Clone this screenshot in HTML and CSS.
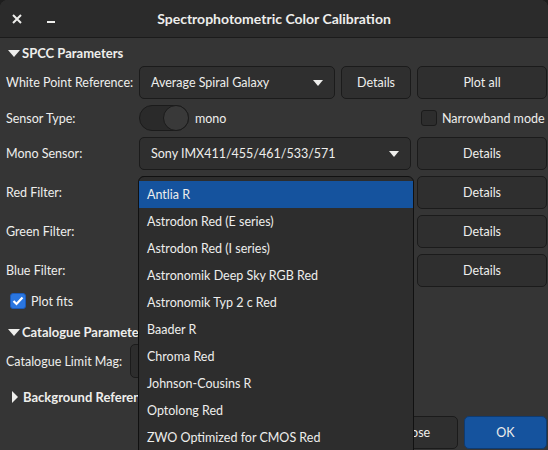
FILE: index.html
```html
<!DOCTYPE html>
<html lang="en">

<head>
    <meta charset="UTF-8">
    <title>Spectrophotometric Color Calibration</title>
    <link rel="stylesheet" href="styles.css">
</head>

<body>
    <div class="window">
        <header class="titlebar">
            <div class="tb-buttons">
                <svg class="tb-close" width="10" height="10" viewBox="0 0 10 10">
                    <path d="M1 1 L9 9 M9 1 L1 9" stroke="#eeeeec" stroke-width="2" />
                </svg>
                <span class="tb-min"></span>
            </div>
            <h1>Spectrophotometric Color Calibration</h1>
        </header>

        <main class="content">
            <div class="expander open">SPCC Parameters</div>

            <div class="params">
                <span class="label">White Point Reference:</span>
                <div class="combo">Average Spiral Galaxy</div>
                <button class="btn">Details</button>
                <button class="btn">Plot all</button>

                <span class="label">Sensor Type:</span>
                <div class="switch-row">
                    <span class="switch"><span class="knob"></span></span>
                    <span>mono</span>
                </div>
                <span></span>
                <label class="check"><span class="box"></span>Narrowband mode</label>

                <span class="label">Mono Sensor:</span>
                <div class="combo wide">Sony IMX411/455/461/533/571</div>
                <button class="btn">Details</button>

                <span class="label">Red Filter:</span>
                <div class="combo wide"></div>
                <button class="btn">Details</button>

                <span class="label">Green Filter:</span>
                <div class="combo wide"></div>
                <button class="btn">Details</button>

                <span class="label">Blue Filter:</span>
                <div class="combo wide"></div>
                <button class="btn">Details</button>
            </div>

            <label class="check plot-fits"><span class="box on">
                <svg width="12" height="10" viewBox="0 0 12 10">
                    <path d="M1.5 5 L4.5 8 L10.5 1.5" fill="none" stroke="#fff" stroke-width="2.2" />
                </svg>
            </span>Plot fits</label>

            <div class="expander open cat">Catalogue Parameters</div>
            <div class="cat-row">
                <span class="label">Catalogue Limit Mag:</span>
                <div class="spin"></div>
            </div>

            <div class="expander closed">Background Reference</div>

            <div class="actions">
                <button class="btn close-btn">Close</button>
                <button class="btn ok">OK</button>
            </div>
        </main>

        <ul class="popup">
            <li class="selected">Antlia R</li>
            <li>Astrodon Red (E series)</li>
            <li>Astrodon Red (I series)</li>
            <li>Astronomik Deep Sky RGB Red</li>
            <li>Astronomik Typ 2 c Red</li>
            <li>Baader R</li>
            <li>Chroma Red</li>
            <li>Johnson-Cousins R</li>
            <li>Optolong Red</li>
            <li>ZWO Optimized for CMOS Red</li>
        </ul>
    </div>
</body>

</html>
```

FILE: styles.css
```css
* {
    margin: 0;
    padding: 0;
    box-sizing: border-box;
}

body {
    background: #1e1e1e;
    font-family: Lato, "Noto Sans", sans-serif;
    font-size: 12.5px;
    color: #eeeeec;
    overflow: hidden;
}

.window {
    position: relative;
    width: 548px;
    height: 450px;
    background: #353535;
    border-radius: 8px 8px 0 0;
    overflow: hidden;
}

/* title bar */

.titlebar {
    height: 38px;
    background: #2b2b2b;
    border-bottom: 1px solid #1b1b1b;
    display: flex;
    align-items: center;
    position: relative;
}

.tb-buttons {
    display: flex;
    align-items: center;
    padding-left: 12px;
}

.tb-min {
    width: 8px;
    height: 2px;
    background: #eeeeec;
    margin-left: 25px;
    margin-top: 7px;
}

.titlebar h1 {
    position: absolute;
    left: 0;
    right: 0;
    text-align: center;
    font-size: 14px;
    font-weight: bold;
}

/* content */

.content {
    padding: 6px 1px 0 6px;
}

.expander {
    height: 18px;
    line-height: 18px;
    font-size: 13px;
    font-weight: bold;
    display: flex;
    align-items: center;
}

.expander::before {
    content: "";
    width: 0;
    height: 0;
    margin: 0 2px 0 2px;
}

.expander.open::before {
    border-left: 6px solid transparent;
    border-right: 6px solid transparent;
    border-top: 7px solid #eeeeec;
}

.expander.closed::before {
    border-top: 6px solid transparent;
    border-bottom: 6px solid transparent;
    border-left: 6px solid #eeeeec;
    margin: 0 5px 0 6px;
}

.params {
    margin-top: 4px;
    display: grid;
    grid-template-columns: 127px 196px 70px 130px;
    grid-template-rows: 33px 26px 33px 33px 33px 33px;
    gap: 6px;
    align-items: center;
}

.label {
    white-space: nowrap;
}

.btn {
    height: 33px;
    background: #2f2f2f;
    border: 1px solid #1b1b1b;
    border-radius: 5px;
    color: #eeeeec;
    font-family: inherit;
    font-size: 12.5px;
}

.combo {
    height: 33px;
    background: #2f2f2f;
    border: 1px solid #1b1b1b;
    border-radius: 5px;
    display: flex;
    align-items: center;
    padding-left: 11px;
    position: relative;
}

.combo::after {
    content: "";
    position: absolute;
    right: 11px;
    top: 13px;
    border-left: 5px solid transparent;
    border-right: 5px solid transparent;
    border-top: 6px solid #eeeeec;
}

.combo.wide {
    grid-column: span 2;
}

.switch-row {
    display: flex;
    align-items: center;
    gap: 6px;
}

.switch {
    width: 50px;
    height: 26px;
    background: #2a2a2a;
    border: 1px solid #1b1b1b;
    border-radius: 13px;
    position: relative;
}

.knob {
    position: absolute;
    right: -1px;
    top: -1px;
    width: 26px;
    height: 26px;
    border-radius: 50%;
    background: #393939;
    border: 1px solid #1b1b1b;
}

.check {
    display: flex;
    align-items: center;
    gap: 5px;
    white-space: nowrap;
}

.params .check {
    padding-left: 4px;
}

.box {
    width: 16px;
    height: 16px;
    border-radius: 3px;
    background: #2d2d2d;
    border: 1px solid #1b1b1b;
    display: flex;
    align-items: center;
    justify-content: center;
}

.box.on {
    background: #2a76e0;
    border-color: #1c5ab8;
}

.plot-fits {
    margin-top: 6px;
    padding-left: 4px;
    height: 16px;
}

.expander.cat {
    margin-top: 14px;
}

.cat-row {
    margin-top: 3px;
    display: flex;
    align-items: center;
    height: 34px;
}

.cat-row .label {
    width: 124px;
}

.spin {
    width: 160px;
    height: 34px;
    background: #2d2d2d;
    border: 1px solid #1b1b1b;
    border-radius: 5px;
}

.expander.closed {
    margin-top: 10px;
}

.actions {
    margin-top: 10px;
    display: flex;
    justify-content: flex-end;
    gap: 6px;
}

.close-btn {
    width: 86px;
}

.ok {
    width: 83px;
    background: #15539e;
    border-color: #0f3b71;
}

/* dropdown list */

.popup {
    position: absolute;
    left: 138px;
    top: 176px;
    width: 276px;
    height: 300px;
    list-style: none;
    background: #2d2d2d;
    border: 1px solid #111;
    border-radius: 6px 6px 0 0;
    padding-top: 4px;
}

.popup li {
    height: 27px;
    line-height: 27px;
    padding-left: 8px;
}

.popup .selected {
    background: #15539e;
}
```
